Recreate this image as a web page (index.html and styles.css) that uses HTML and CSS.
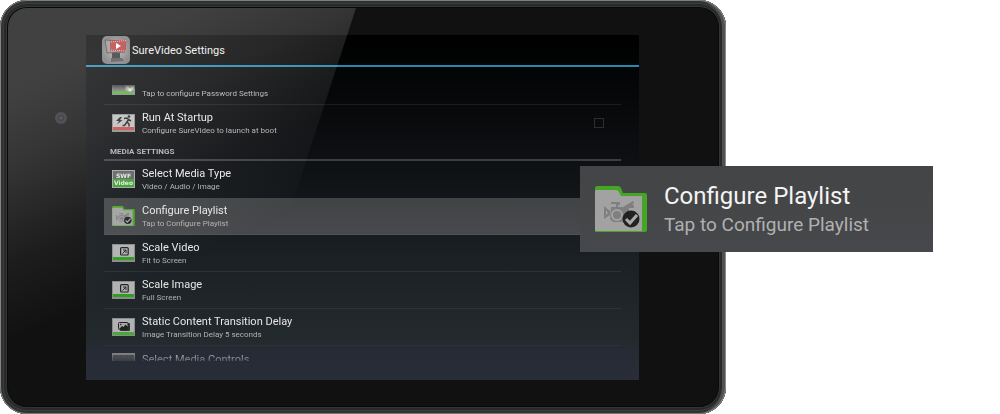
FILE: index.html
```html
<!DOCTYPE html>
<html lang="en">
<head>
    <meta charset="UTF-8">
    <meta name="viewport" content="width=device-width, initial-scale=1.0">
    <title>SureVideo Settings</title>
    <link rel="stylesheet" href="styles.css">
</head>
<body>
    <!-- shared icons -->
    <svg class="sprite" aria-hidden="true">
        <symbol id="icon-folder" viewBox="0 0 52 46">
            <path d="M0 2Q0 0 2 0H23Q25 0 26 2L28 7H50Q52 7 52 9V44Q52 46 50 46H1Q0 46 0 45Z" fill="#45a524"/>
            <path d="M0 5Q0 4 2 4H21Q23 4 24 6L26 10H47V45H1Q0 45 0 44Z" fill="#a2a2a2"/>
            <g fill="#7f7f7f">
                <path d="M9 20L15 25V29L9 33ZM11 24V29L13 27Z" fill-rule="evenodd"/>
                <path d="M16 21H28L38 15L39 17L37 19H39V22H34V36H18L15 33Z"/>
                <path d="M16 16H25V19H23V21H21V18H16Z"/>
            </g>
            <circle cx="22" cy="29" r="6" fill="#a2a2a2"/>
            <circle cx="22" cy="29" r="4" fill="#7f7f7f"/>
            <circle cx="36" cy="33" r="8.5" fill="#222"/>
            <path d="M31 33L35 37L42 29" fill="none" stroke="#aaa" stroke-width="3"/>
        </symbol>
        <symbol id="icon-scale" viewBox="0 0 23 18">
            <path d="M0 0H23V18H0Z" fill="#8b8b8b"/>
            <path d="M1 1H22V13H1Z" fill="#b2b2b2"/>
            <path d="M1 13H22V16H1Z" fill="#2f9e22"/>
            <rect x="8.6" y="3.6" width="7.6" height="7.4" rx="1" fill="none" stroke="#222" stroke-width="1.2"/>
            <path d="M10.500 9.500L13.500 6.500M11 6H14V9" fill="none" stroke="#222"/>
        </symbol>
    </svg>

    <main class="stage">
        <div class="tablet">
            <span class="camera"></span>
            <div class="screen">
                <header class="title-bar">
                    <svg class="app-icon" viewBox="0 0 28 28">
                        <defs>
                            <radialGradient id="app-bg">
                                <stop offset="0" stop-color="#b5b5b5"/>
                                <stop offset="1" stop-color="#777"/>
                            </radialGradient>
                        </defs>
                        <rect width="28" height="28" rx="5" fill="url(#app-bg)"/>
                        <path d="M3 4L23 5V16L5 17Z" fill="#949494" stroke="#4b4b4b"/>
                        <path d="M10 17H18V22H10Z" fill="#333"/>
                        <path d="M9 22H20L22 25L9 26Z" fill="#505050"/>
                        <path d="M8 5L24 3.500V16L8 15Z" fill="#b63b3b"/>
                        <path d="M9 6L24 4.500M9 14L24 15" stroke="#e5b5b5" stroke-dasharray="1 1"/>
                        <path d="M14 7L19 10L14 13Z" fill="#fff"/>
                    </svg>
                    <h1>SureVideo Settings</h1>
                </header>

                <div class="settings">
                    <div class="row row-first">
                        <svg class="icon-cut" viewBox="0 8 23 10">
                            <path d="M0 6H23V18H0Z" fill="#858585"/>
                            <path d="M1 6H13V14H1Z" fill="#777"/>
                            <path d="M1 14H22V17H1Z" fill="#59ad3b"/>
                            <path d="M13 8H22V13L18 15L13 13Z" fill="#aaa"/>
                            <path d="M15 10L18 13L21 10" fill="none" stroke="#eee" stroke-width="2"/>
                        </svg>
                        <p class="summary">Tap to configure Password Settings</p>
                    </div>
                    <div class="row row-plain">
                        <svg class="icon" viewBox="0 0 23 18">
                            <path d="M0 0H23V18H0Z" fill="#8b8b8b"/>
                            <path d="M1 1H22V13H1Z" fill="#bdbdbd"/>
                            <path d="M1 13H22V16H1Z" fill="#c64b49"/>
                            <circle cx="17" cy="2.600" r="1.300" fill="#222"/>
                            <path d="M12 4.500L15 4L16.500 5.500L15 8L17 10V12.500M15 8L12.500 11.500H10.500M16.500 5.500L19 7" fill="none" stroke="#222" stroke-width="1.500"/>
                            <path d="M8 3L4 7H7L5 10.500L10.500 6H8L10 3Z" fill="#222"/>
                        </svg>
                        <label class="text" for="startup">
                            <span class="name">Run At Startup</span>
                            <span class="summary">Configure SureVideo to launch at boot</span>
                        </label>
                        <input type="checkbox" id="startup">
                    </div>

                    <h2>MEDIA SETTINGS</h2>

                    <div class="row row-plain">
                        <svg class="icon" viewBox="0 0 23 18">
                            <path d="M0 0H23V18H0Z" fill="#a4a4a4"/>
                            <path d="M1 1H22V9H1Z" fill="#5f6262"/>
                            <path d="M1 9H22V17H1Z" fill="#38a12b"/>
                            <text x="11.500" y="7.500" class="icon-label">SWF</text>
                            <text x="11.500" y="15" class="icon-label">Video</text>
                        </svg>
                        <div class="text">
                            <span class="name">Select Media Type</span>
                            <span class="summary">Video / Audio / Image</span>
                        </div>
                    </div>
                    <div class="row row-active">
                        <svg class="icon icon-tall"><use href="#icon-folder"/></svg>
                        <div class="text">
                            <span class="name">Configure Playlist</span>
                            <span class="summary">Tap to Configure Playlist</span>
                        </div>
                    </div>
                    <div class="row">
                        <svg class="icon"><use href="#icon-scale"/></svg>
                        <div class="text">
                            <span class="name">Scale Video</span>
                            <span class="summary">Fit to Screen</span>
                        </div>
                    </div>
                    <div class="row">
                        <svg class="icon"><use href="#icon-scale"/></svg>
                        <div class="text">
                            <span class="name">Scale Image</span>
                            <span class="summary">Full Screen</span>
                        </div>
                    </div>
                    <div class="row">
                        <svg class="icon" viewBox="0 0 23 18">
                            <path d="M0 0H23V18H0Z" fill="#8b8b8b"/>
                            <path d="M1 1H22V14H1Z" fill="#b2b2b2"/>
                            <path d="M1 14H22V17H1Z" fill="#48a934"/>
                            <rect x="8" y="5" width="10" height="8" rx="1" fill="#333"/>
                            <rect x="6.500" y="4.500" width="9.500" height="7" rx="1" fill="#aaa" stroke="#222"/>
                            <path d="M7 11L10 8L11.500 9L13.500 6.500L16 9V11Z" fill="#222"/>
                            <circle cx="8.800" cy="6.500" r="0.800" fill="#222"/>
                        </svg>
                        <div class="text">
                            <span class="name">Static Content Transition Delay</span>
                            <span class="summary">Image Transition Delay 5 seconds</span>
                        </div>
                    </div>
                    <div class="row row-last">
                        <svg class="icon" viewBox="0 0 23 18">
                            <path d="M0 0H23V18H0Z" fill="#a0a0a0"/>
                            <path d="M1 2H22V17H1Z" fill="#686868"/>
                            <path d="M3 3H6M8 3H11M13 3H16M18 3H21" stroke="#555"/>
                        </svg>
                        <div class="text">
                            <span class="name">Select Media Controls</span>
                        </div>
                    </div>
                </div>
            </div>
        </div>

        <aside class="callout">
            <svg class="callout-icon"><use href="#icon-folder"/></svg>
            <div class="callout-text">
                <strong>Configure Playlist</strong>
                <span>Tap to Configure Playlist</span>
            </div>
        </aside>
    </main>
</body>
</html>
```
FILE: styles.css
```css
* {
    box-sizing: border-box;
}
body {
    margin: 0;
    background: #fff;
    font-family: Roboto, "Liberation Sans", sans-serif;
}
h1, h2, p {
    margin: 0;
    font-weight: normal;
}
.sprite {
    position: absolute;
    width: 0;
    height: 0;
}
.stage {
    position: relative;
}

/* tablet body */
.tablet {
    position: relative;
    width: 72.6%;
    padding: 35px 87px 34px 86px;
    border-radius: 27px;
    background: #111;
    box-shadow:
        inset 0 1px #7d817e,
        inset 1px 0 #858785,
        inset -1px 0 #8b8b8b,
        inset 0 -1px #777,
        inset -4px 0 #505151,
        inset 0 0 0 3px #303231,
        inset 0 0 0 4px #3c3e3d,
        inset 0 0 0 6px #282929,
        inset 0 0 0 7px #343535,
        inset 0 0 0 8px #090909;
}
/* glass reflection */
.tablet::after {
    content: "";
    position: absolute;
    inset: 8px;
    border-radius: 19px;
    background: linear-gradient(155deg, rgba(255, 255, 255, 0.2) 12%, rgba(255, 255, 255, 0.15) 22%, rgba(255, 255, 255, 0.05) 35%, rgba(255, 255, 255, 0) 46%);
    clip-path: polygon(0 0, 348px 0, 218px 100%, 0 100%);
    pointer-events: none;
}
.camera {
    position: absolute;
    left: 55px;
    top: 112px;
    width: 12px;
    height: 12px;
    border: 3px solid #303030;
    border-radius: 50%;
    background: radial-gradient(#35395a 20%, #202124 60%);
}
.screen {
    padding-bottom: 19px;
    background: linear-gradient(#000 0, #040506 12%, #0d0f12 35%, #1a1f23 62%, #232a2d 88%, #262b35 92%, #282d37 100%);
}

/* title bar */
.title-bar {
    display: flex;
    align-items: center;
    gap: 2px;
    height: 32px;
    padding-left: 16px;
    border-bottom: 2px solid #2589b0;
}
.app-icon {
    width: 28px;
    height: 28px;
}
h1 {
    padding-top: 2px;
    font-size: 11px;
    line-height: 16px;
    color: #eee;
}

/* settings list */
.settings {
    margin: 18px 18px 0;
    -webkit-mask-image: linear-gradient(rgba(0, 0, 0, 0.4), #000 5px, #000 264px, rgba(0, 0, 0, 0.3) 100%);
    mask-image: linear-gradient(rgba(0, 0, 0, 0.4), #000 5px, #000 264px, rgba(0, 0, 0, 0.3) 100%);
}
.row {
    display: flex;
    align-items: center;
    gap: 7px;
    height: 37px;
    padding: 0 17px 0 8px;
    border-bottom: 1px solid #2e3234;
}
.row-first {
    height: 20px;
    align-items: flex-start;
    border-color: #1b1c1d;
}
.row-plain {
    border-color: transparent;
}
.row-active {
    background: linear-gradient(#414345, #48494c);
    border-color: #505154;
}
.row-last {
    height: 15px;
    align-items: flex-start;
    padding-top: 7px;
    border: 0;
    overflow: hidden;
}
.icon {
    flex: none;
    width: 23px;
    height: 18px;
}
.icon-tall {
    height: 20px;
}
.icon-cut {
    flex: none;
    width: 23px;
    height: 10px;
}
.icon-label {
    font-family: "DejaVu Sans", sans-serif;
    font-size: 6px;
    font-weight: bold;
    text-anchor: middle;
    fill: #e4e4e4;
}
.text {
    display: flex;
    flex: 1;
    flex-direction: column;
    gap: 1px;
    padding-top: 1px;
}
.name {
    font-size: 11px;
    line-height: 13px;
    color: #e6e6e6;
}
.summary {
    font-size: 8px;
    line-height: 12px;
    color: #b0b2b3;
}
.row-first .summary {
    padding-top: 3px;
}
.row-last .text {
    padding-top: 0;
}
#startup {
    appearance: none;
    width: 10px;
    height: 10px;
    margin: 0;
    border: 1px solid #2d2e30;
}
h2 {
    height: 19px;
    padding-left: 6px;
    border-bottom: 2px solid #3c3f41;
    font-size: 8px;
    font-weight: bold;
    line-height: 20px;
    color: #b0b0b0;
}

/* enlarged row */
.callout {
    position: absolute;
    left: 58%;
    top: 166px;
    display: flex;
    align-items: center;
    gap: 17px;
    width: 353px;
    height: 86px;
    padding: 0 15px;
    background: linear-gradient(#424445, #47484b);
}
.callout-icon {
    flex: none;
    width: 52px;
    height: 46px;
}
.callout-text {
    display: flex;
    flex-direction: column;
    padding-top: 2px;
}
.callout strong {
    font-size: 24px;
    font-weight: normal;
    line-height: 30px;
    color: #f4f4f4;
}
.callout span {
    font-size: 19px;
    line-height: 28px;
    color: #b0b1b2;
}
```
